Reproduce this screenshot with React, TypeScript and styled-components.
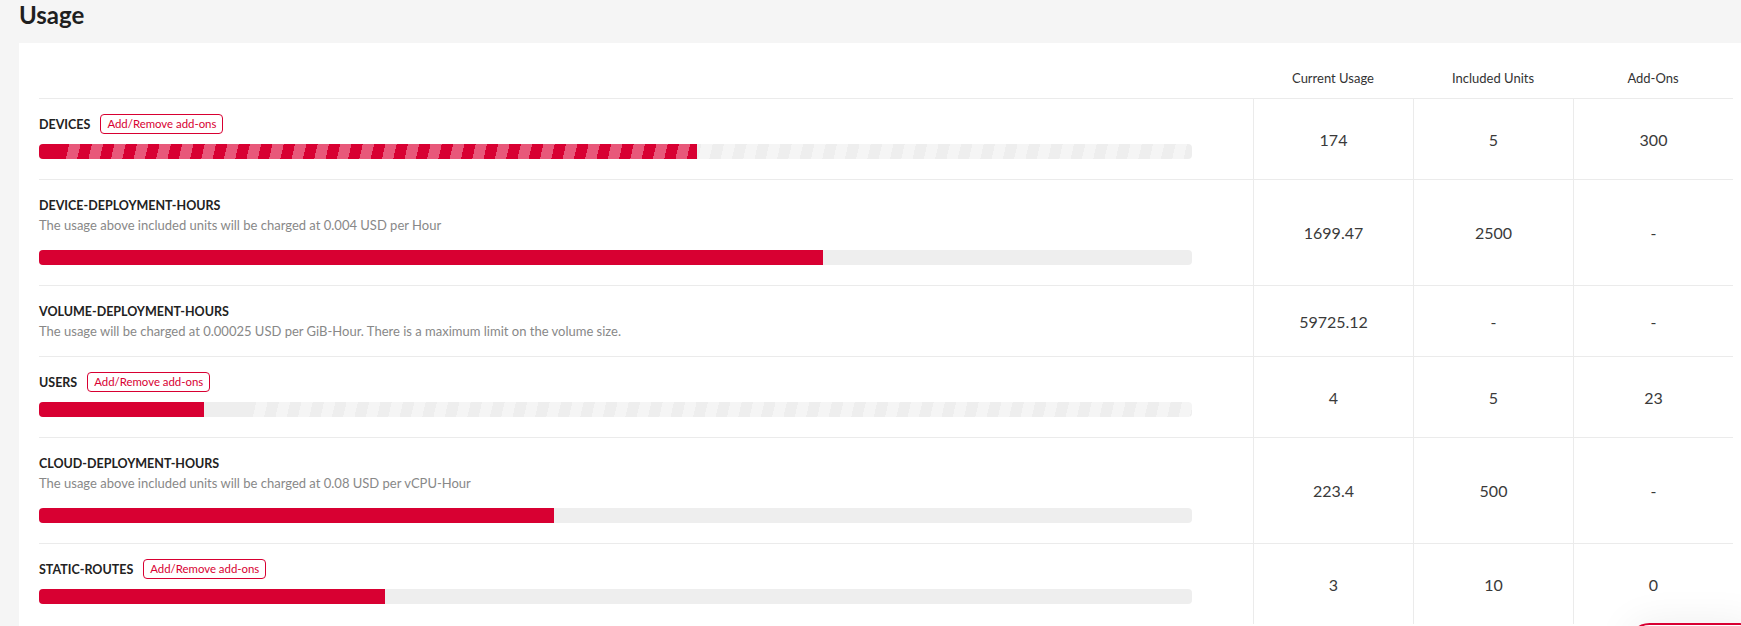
import styled, { createGlobalStyle } from 'styled-components';

const RED = '#d80032';
const PINK = '#e8587a';

type UsageRow = {
  name: string;
  desc?: string;
  addon?: boolean;
  used: number;
  included: number | null;
  addOns: number | null;
  bar?: boolean;
};

const rows: UsageRow[] = [
  { name: 'DEVICES', addon: true, used: 174, included: 5, addOns: 300, bar: true },
  {
    name: 'DEVICE-DEPLOYMENT-HOURS',
    desc: 'The usage above included units will be charged at 0.004 USD per Hour',
    used: 1699.47,
    included: 2500,
    addOns: null,
    bar: true,
  },
  {
    name: 'VOLUME-DEPLOYMENT-HOURS',
    desc: 'The usage will be charged at 0.00025 USD per GiB-Hour. There is a maximum limit on the volume size.',
    used: 59725.12,
    included: null,
    addOns: null,
  },
  { name: 'USERS', addon: true, used: 4, included: 5, addOns: 23, bar: true },
  {
    name: 'CLOUD-DEPLOYMENT-HOURS',
    desc: 'The usage above included units will be charged at 0.08 USD per vCPU-Hour',
    used: 223.4,
    included: 500,
    addOns: null,
    bar: true,
  },
  { name: 'STATIC-ROUTES', addon: true, used: 3, included: 10, addOns: 0, bar: true },
];

const UsageBar = ({ used, included, addOns }: { used: number; included: number; addOns: number }) => {
  const total = included + addOns;
  const fill = Math.min(used / total, 1) * 100;
  const includedPart = (included / total) * 100;
  const solidInFill = (Math.min(used, included) / used) * 100;

  return (
    <Track>
      <TrackSolid style={{ width: `${includedPart}%` }} />
      <TrackExtra />
      <Fill style={{ width: `${fill}%` }}>
        <FillSolid style={{ width: `${solidInFill}%` }} />
        <FillExtra />
      </Fill>
    </Track>
  );
};

const App = () => {
  return (
    <>
      <GlobalStyle />
      <Page>
        <Title>Usage</Title>
        <Card>
          <HeadRow>
            <HeadCell />
            <HeadCell center>Current Usage</HeadCell>
            <HeadCell center>Included Units</HeadCell>
            <HeadCell center>Add-Ons</HeadCell>
          </HeadRow>
          {rows.map((r) => (
            <Row key={r.name}>
              <LabelCell>
                <LabelHead>
                  <Name>{r.name}</Name>
                  {r.addon && <AddonButton>Add/Remove add-ons</AddonButton>}
                </LabelHead>
                {r.desc && <Desc>{r.desc}</Desc>}
                {r.bar && (
                  <BarWrap spaced={!!r.desc}>
                    <UsageBar used={r.used} included={r.included ?? 0} addOns={r.addOns ?? 0} />
                  </BarWrap>
                )}
              </LabelCell>
              <ValueCell>{r.used}</ValueCell>
              <ValueCell>{r.included ?? '-'}</ValueCell>
              <ValueCell>{r.addOns ?? '-'}</ValueCell>
            </Row>
          ))}
        </Card>
      </Page>
      <FloatButton />
    </>
  );
};

const GlobalStyle = createGlobalStyle`
  html, body {
    margin: 0;
    padding: 0;
    overflow: hidden;
    background: #f5f5f5;
  }
  * {
    box-sizing: border-box;
  }
  body {
    font-family: Lato, "Noto Sans", "Liberation Sans", sans-serif;
    color: #222;
  }
`;

const Page = styled.div`
  display: flex;
  flex-direction: column;
  padding-left: 19px;
`;

const Title = styled.h1`
  margin: 0;
  height: 43px;
  line-height: 30px;
  font-size: 24px;
  font-weight: 700;
  color: #1f1f1f;
`;

const Card = styled.div`
  background: #ffffff;
  padding: 0 8px 24px 20px;
`;

const HeadRow = styled.div`
  display: grid;
  grid-template-columns: 1fr 160px 160px 160px;
  height: 56px;
  border-bottom: 1px solid #ebebeb;
`;

const HeadCell = styled.div<{ center?: boolean }>`
  display: flex;
  align-items: flex-end;
  justify-content: ${(p) => (p.center ? 'center' : 'flex-start')};
  padding-bottom: 12px;
  font-size: 13px;
  color: #333;
`;

const Row = styled.div`
  display: grid;
  grid-template-columns: 1fr 160px 160px 160px;
  border-bottom: 1px solid #ebebeb;
  &:last-child {
    border-bottom-color: transparent;
  }
`;

const LabelCell = styled.div`
  display: flex;
  flex-direction: column;
  padding: 15px 0 15px;
`;

const LabelHead = styled.div`
  display: flex;
  align-items: center;
  height: 20px;
`;

const Name = styled.span`
  font-size: 12.5px;
  font-weight: 700;
  color: #222;
`;

const AddonButton = styled.button`
  height: 20px;
  margin-left: 10px;
  padding: 0 6px;
  border: 1px solid ${RED};
  border-radius: 4px;
  background: #fff;
  color: ${RED};
  font-family: inherit;
  font-size: 11.4px;
  line-height: 18px;
  cursor: pointer;
`;

const Desc = styled.div`
  font-size: 13px;
  line-height: 20px;
  color: #888;
`;

const BarWrap = styled.div<{ spaced: boolean }>`
  margin-top: ${(p) => (p.spaced ? '15px' : '10px')};
  margin-bottom: 5px;
`;

const Track = styled.div`
  position: relative;
  display: flex;
  width: 95%;
  height: 15px;
  border-radius: 4px;
  overflow: hidden;
`;

const TrackSolid = styled.div`
  height: 100%;
  background: #eeeeee;
`;

const TrackExtra = styled.div`
  flex: 1;
  height: 100%;
  background: repeating-linear-gradient(103deg, #eeeeee 0 11px, #f5f5f5 11px 22px);
`;

const Fill = styled.div`
  position: absolute;
  top: 0;
  left: 0;
  bottom: 0;
  display: flex;
`;

const FillSolid = styled.div`
  height: 100%;
  background: ${RED};
`;

const FillExtra = styled.div`
  flex: 1;
  height: 100%;
  background: repeating-linear-gradient(103deg, ${RED} 0 11px, ${PINK} 11px 22px);
`;

const ValueCell = styled.div`
  display: flex;
  align-items: center;
  justify-content: center;
  border-left: 1px solid #ebebeb;
  font-size: 16px;
  color: #3a3a3a;
`;

const FloatButton = styled.div`
  position: fixed;
  right: -20px;
  bottom: -40px;
  width: 133px;
  height: 43px;
  border: 2px solid ${RED};
  border-radius: 22px;
  background: #fff;
  box-shadow: 0 0 40px rgba(0, 0, 0, 0.07);
`;

export default App;
